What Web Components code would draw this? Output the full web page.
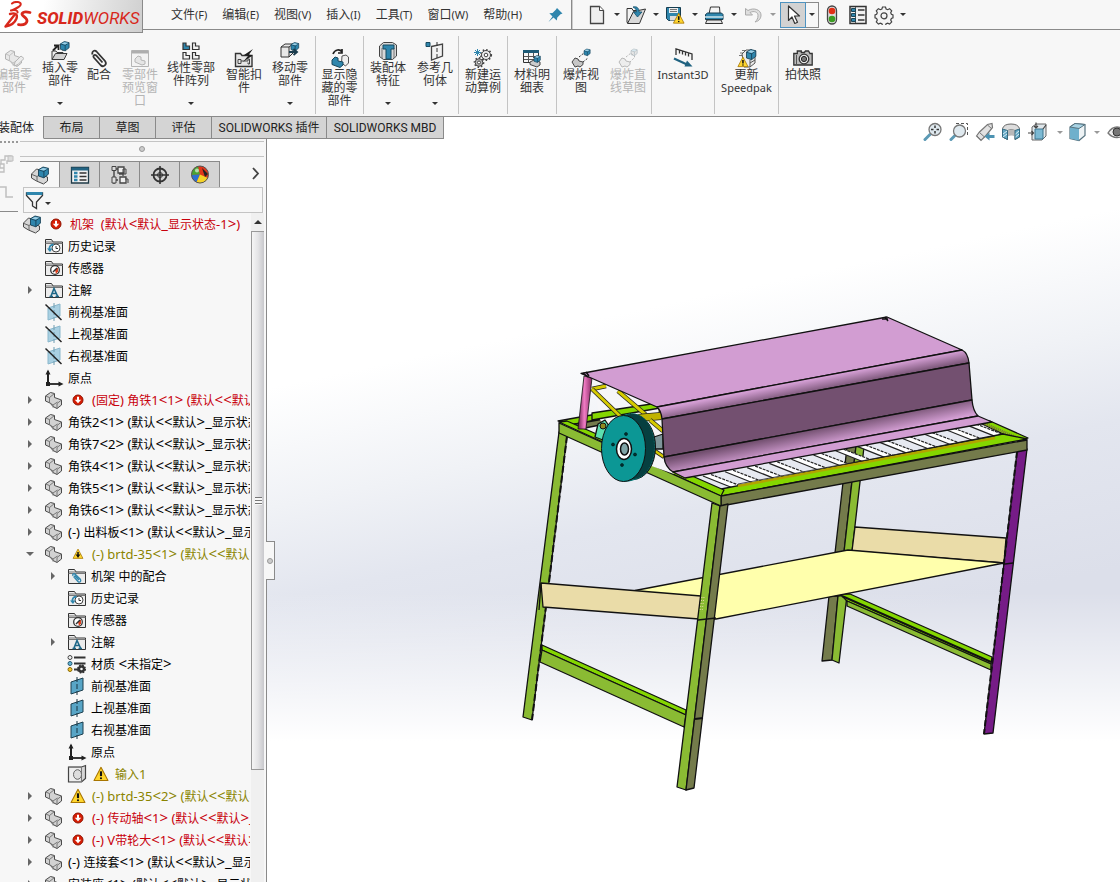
<!DOCTYPE html>
<html lang="zh-CN">
<head>
<meta charset="utf-8">
<title>SOLIDWORKS</title>
<style>
  html, body { height: 100%; }
  body { margin: 0; overflow: hidden; font: 12px/13px "Noto Sans", "Noto Sans CJK SC", sans-serif; color: #333; background: #f7f7f7; }
</style>
</head>
<body>
<sw-app></sw-app>

<script>
/* ---------- icon library, 20 x 20 grid ---------- */
const BLUE = '#2f86ad', INK = '#3a3a3a';
const part = `<path d="M1.500 6l5-3.500 4 1v4l7 2.500v5l-4.500 3.500-4-2-3-3.500-4.500-2z" fill="#d2d2d2" stroke="#4a4a4a"/><path d="M1.500 6l4 1.500 5-4M5.500 7.500v5l3.500 2.500 4.500-3M9 15v2.500M13 13.500l4.500-3.500M13 13.500v5" fill="none" stroke="#777"/>`;
const cube = (x, y, s, c = BLUE) => `<g transform="translate(${x} ${y}) scale(${s})"><path d="M0 3l5-3 6 1.500v6.500l-5 4-6-2z" fill="${c}" stroke="#163f55"/><path d="M0 3l6 2 5-3.500M6 5v7" fill="none" stroke="#163f55"/><path d="M1 3l4-2 5 1-4 2z" fill="#9fd0e6"/></g>`;
const assembly = `<path d="M1.500 9l5-5 4 1v5l7 2v4l-4 3-7-3-5-3z" fill="#d6d6d6" stroke="#4a4a4a"/><path d="M2 9.500l5 2v4.500M7 11.500l4-2.500" fill="none" stroke="#666"/>${cube(8.500,2,0.900)}`;
const folder = `<path d="M1.500 17.500v-14h6l1.500 2.500h9.500v11.500z" fill="#ececec" stroke="#333"/><path d="M2 6h7M1.500 7.500h17" stroke="#777" fill="none"/>`;
const warn = (x, y, s) => `<g transform="translate(${x} ${y}) scale(${s})"><path d="M7 .8L13.500 13H.5z" fill="#ffd62e" stroke="#a87500" stroke-linejoin="round"/><path d="M7 4.500v4.500" stroke="#111" stroke-width="2"/><circle cx="7" cy="11" r="1" fill="#111"/></g>`;
const gear = (x, y, r, f) => `<circle cx="${x}" cy="${y}" r="${r}" fill="${f}" stroke="#444"/><circle cx="${x}" cy="${y}" r="${r + .8}" fill="none" stroke="#444" stroke-width="1.600" stroke-dasharray="1.500 2"/><circle cx="${x}" cy="${y}" r="${r / 2.500}" fill="#fff" stroke="#444"/>`;
const planeShape = (f, e) => `<path d="M4 6l12-4v12L4 18z" fill="${f}" stroke="${e}"/>`;
const lens = (x, y, r) => `<path d="M${x - r + 1} ${y + r - 1}L2 17.500" stroke="#5c9ab5" stroke-width="3" stroke-linecap="round"/><circle cx="${x}" cy="${y}" r="${r}" fill="#dfe9ef" stroke="#777" stroke-width="1.300"/>`;

const ICONS = {
  part, assembly,
  editPart: `<g opacity=".4">${part}<path d="M10 18l1-4 6-6 3 2.500-6 6z" fill="#ddd" stroke="#555"/></g>`,
  insertPart: `<path d="M2 18.500V10h4l1 1.500h6v3" fill="#eee" stroke="${INK}"/><path d="M2 18.500l3.500-6H17l-3 6z" fill="#d2d2d2" stroke="${INK}"/><path d="M3 9.500L7.500 5M4 4.500h4.500V9" fill="none" stroke="#222" stroke-width="1.800"/><path d="M9 4l4 0 0 6" fill="#ddd" stroke="#555"/>${cube(10.500,.5,.780)}`,
  clip: `<path d="M3.500 6.500c-1-3 2-5 4-3l8.500 9.500c2.500 3.500-1.500 7-4.500 4L5 9.800c-1.500-2 .5-3.800 2.200-2.300l6.300 7" fill="none" stroke="#333" stroke-width="1.800"/>`,
  preview: `<g opacity=".4"><path d="M1.500 2.500h17v16h-17z" fill="#eee" stroke="#555"/><path d="M2 4h16" stroke="#444" stroke-width="3"/><path d="M5 11l3-3 3 1v3l4 1v3l-3 1-7-3z" fill="#ccc" stroke="#555"/></g>`,
  pattern: `<g fill="#f3f3f3" stroke="#333" stroke-width="1.200"><path d="M2 2h3v3h3.500v3.500H2z" fill="${BLUE}"/><path d="M11.500 2h3v3H18v3.500h-6.500z"/><path d="M2 11.500h3v3h3.500V18H2z"/><path d="M11.500 11.500h3v3H18V18h-6.500z"/></g>`,
  smart: `<path d="M1.500 5.500h5l1.500 2h10v11H1.500z" fill="#e6e6e6" stroke="#333" stroke-width="1.400"/><path d="M4 11.500h3v4H4zM7 13h7v-2h1.500v5H14v-1.500" fill="none" stroke="#444"/><path d="M19 1l-9 6 4 1-5 6 9.500-6.500-3.500-1z" fill="#1d1d1d"/>`,
  move: `<path d="M1 6l4-3h8v9l-4 4H1z" fill="#e8e8e8" stroke="#333"/><path d="M1 6h8v10M9 6l4-3" fill="none" stroke="#333"/>${cube(11,1.500,.700)}<path d="M9 11h7M13.500 8l3.500 3-3.500 3" fill="none" stroke="#1b3d4e" stroke-width="1.900"/>`,
  showHide: `<path d="M3 6c2-5 7-5 9-2M12 1v4H8" fill="none" stroke="#222" stroke-width="1.700"/><path d="M12 8l4-1 2.500 2v6l-3 3-4-3z" fill="#eee" stroke="#555"/><path d="M2 12l3-3 3 1 0 3 5 1v3l-3 2.500-8-3z" fill="${BLUE}" stroke="#17465c"/>`,
  asmFeature: `<path d="M1.500 5l4-3.500h9L18.500 4v11l-4 3.500h-9l-4-3z" fill="#d8d8d8" stroke="#444"/><path d="M4 7v10M16 7v10" stroke="#777"/><path d="M5 4h11v4h-3v10H8V8H5z" fill="${BLUE}" stroke="#174a61"/>`,
  refGeom: `<path d="M1 1.500h4v4H1z" fill="${BLUE}" stroke="#174a61"/><path d="M6.500 5.500L17.500 3v12l-11 4z" fill="#f3f3f3" stroke="#444" stroke-width="1.300"/><path d="M12 1v18" stroke="#333" stroke-dasharray="4 2"/>`,
  motion: `${gear(13,7,4.500,'#eee')}${gear(6,14.500,3.800,'#bbb')}<path d="M4.500 1v7M1 4.500h7M2 2l5 5M7 2L2 7" stroke="${BLUE}"/>`,
  bom: `<path d="M1.500 2.500h15v12h-15z" fill="#f6f6f6" stroke="#333"/><path d="M1 3.500h16" stroke="#1d5a76" stroke-width="3"/><path d="M2 8.500h14M2 11.500h10M6.500 5v9M11.500 5v5" stroke="#555" fill="none"/><path d="M8 14l4-2 6 2v3l-3 2-7-2.500z" fill="#ccc" stroke="#444"/>${cube(12,7.500,.580)}`,
  explode: `<path d="M1 14l3-4 3 1 1 2 4 1v2.500l-3 2.500-2-1-3 1z" fill="#c6c6c6" stroke="#444"/>${cube(13,1,.560)}<path d="M8 9l5-4M12 14l5-4" stroke="#333" stroke-dasharray="2 1.500"/>`,
  explodeLine: `<g opacity=".38"><path d="M1 14l3-4 3 1 1 2 4 1v2.500l-3 2.500-2-1-3 1z" fill="#ddd" stroke="#555"/>${cube(13,1,.560,'#ccc')}<path d="M8 9l5-4 4 4-5 5" fill="none" stroke="#555" stroke-dasharray="2 1.500"/></g>`,
  instant: `<path d="M3 7V1l16 5v6M6.500 2.500v3M9.500 3.500v3M12.500 4.500v3M15.500 5.500v3" fill="none" stroke="#333" stroke-width="1.300"/><path d="M1 10.500l13 6" stroke="#1f6280" stroke-width="2.200"/><path d="M14 12.500l5.500 6-8 0z" fill="#1f6280"/>`,
  speedpak: `<path d="M5 2.500h7M3 5h6M2 7.500h5" stroke="#777"/><path d="M5 6l4-4 6 0 3 3v10l-5 4H7z" fill="#eaeaea" stroke="#555"/>${cube(9.500,1.500,.850)}<path d="M13 12v7M13 15l5-3" stroke="#555"/>${warn(.500,8.500,.780)}`,
  camera: `<path d="M.8 5.500h3.500V3h4v1.500h3L12.500 3h3l1.500 2.500h2.200v11.500H.8z" fill="#bcbcbc" stroke="#333" stroke-width="1.300"/><path d="M3.500 7v9" stroke="#555"/><circle cx="11" cy="11" r="4.800" fill="#e8e8e8" stroke="#333" stroke-width="1.300"/><circle cx="11" cy="11" r="2.600" fill="#777" stroke="#222"/>`,
  pin: `<path d="M12 3l5.500 5.500-2 .8-3.200 3.200-.5 3L8.500 12.500 3.500 17l4-5.500-3.200-3.200 3.200-.4 3.300-3.200z" fill="${BLUE}"/>`,
  doc: `<path d="M3.500 1.500h9l4 4v13h-13z" fill="#eee" stroke="#444" stroke-width="1.300"/><path d="M12.500 1.500v4h4" fill="#fff" stroke="#444"/>`,
  open: `<path d="M1 3.500h5l1 2h5v12H1z" fill="#f2f2f2" stroke="#333"/><path d="M1.500 18.500l6-12 12-2.500-6 14.500z" fill="#d8d8d8" stroke="#333"/><path d="M7 2c4-1 6 1 6 5h3l-4.500 5-4-5h3c0-2-1-4-3.500-5z" fill="${BLUE}" stroke="#17516b" stroke-width=".8"/>`,
  save: `<path d="M1.500 2.500h14v13h-12l-2-2z" fill="${BLUE}" stroke="#153c50"/><path d="M4 3h9v5H4z" fill="#eee"/><path d="M5 4.500h7M5 6.500h7" stroke="#777"/><path d="M5 11h7v4.500H5z" fill="#ddd"/>${warn(8,7.500,.820)}`,
  print: `<path d="M5 9l1.500-7h9L16 9z" fill="#f4f4f4" stroke="#333"/><path d="M1.500 9.500l2-1.500h14l1.500 1.500v5h-17.500z" fill="${BLUE}" stroke="#153c50"/><path d="M1 12h18" stroke="#cfe6ef" stroke-width="1.500"/><path d="M3 15l-1.500 3.500h17L17 15z" fill="#e6e6e6" stroke="#333"/>`,
  undo: `<path d="M2.500 3.500v6.500h7L7 7.500c4-2 8-.5 8 3 0 3-1 4.500-3 6.500 4.500-1 6-4 6-7 0-5-7-8-13-4.500z" fill="#dedede" stroke="#aaa"/>`,
  cursor: `<path d="M5.500 1v14.500l3.500-3.500 2.800 6.500 2.700-1.200-3-6.300h5z" fill="#fff" stroke="#333" stroke-width="1.200" stroke-linejoin="round"/>`,
  traffic: `<rect x="5.500" y="1" width="9" height="18" rx="4.500" fill="#ddd" stroke="#444" stroke-width="1.300"/><circle cx="10" cy="6" r="3.300" fill="#e12f16"/><circle cx="10" cy="14" r="3.300" fill="#3b9c22"/>`,
  options: `<path d="M2 1.500h16v17H2z" fill="#f0f0f0" stroke="#333" stroke-width="1.500"/><path d="M7.500 2v16" stroke="#555"/><g fill="${BLUE}" stroke="#1d4455"><path d="M3.500 3.500h4v3h-4zM3.500 8.500h4v3h-4zM3.500 13.500h4v3h-4z"/></g><path d="M10 5h6.500M10 10h6.500M10 15h6.500" stroke="#333" stroke-width="1.300"/>`,
  gear: `<path d="M8.500 2h3l.6 2 1.600.7 1.900-1 2.100 2.100-1 1.900.7 1.600 1.600.6v3l-1.600.6-.7 1.600 1 1.900-2.100 2.100-1.900-1-1.600.7-.6 1.700h-3l-.6-1.700-1.600-.7-1.900 1-2.100-2.100 1-1.900-.7-1.600L1 12.900v-3l1.600-.6.7-1.600-1-1.900 2.100-2.100 1.900 1L7.900 4z" fill="#f4f4f4" stroke="#444" stroke-width="1.200"/><circle cx="10" cy="10.800" r="3" fill="none" stroke="#444" stroke-width="1.200"/>`,
  zoomFit: `${lens(12,7.500,6)}<path d="M12 3.500v2.500M12 9v2.500M8 7.500h2.500M13.500 7.500H16" stroke="#333" stroke-width="1.500"/>`,
  zoomArea: `<path d="M7 1.500h11.500V13" fill="none" stroke="#555" stroke-dasharray="3 2"/>${lens(10.500,9,6)}`,
  prevView: `<path d="M1.500 14l3-4 8-7.500 4.500-1 .5 4-6.500 8-5 5z" fill="#e2e2e2" stroke="#777" stroke-width="1.200"/><path d="M12.500 3l4 3.500M4.500 10.500l5 4.500M2 14l4 4" fill="none" stroke="#777"/><path d="M19.500 14.500h-6" stroke="#4d93b2" stroke-width="3"/><path d="M14.500 10.500v8l-5-4z" fill="#4d93b2"/>`,
  section: `<path d="M1.500 6.500Q3 2 10 2t8.500 4.500V15l-4.500 2.500V8.500q-4-2-7.500 0v9L1.500 15z" fill="#ddd" stroke="#666"/><path d="M6.500 8.500q3.500-2 7.500 0v6q-3.500-2-7.500 0z" fill="#b9b9b9"/><path d="M1.500 7l5 1.500v9l-5-2.500zM14 8.500L18.500 7v8L14 17.500z" fill="#63a8c5" stroke="#366b80"/><path d="M2 12l4-3M2 15l4-3M14.500 12l3.500-3M14.500 15l3.500-3" stroke="#dbeef5"/>`,
  orient: `<path d="M4 5l4-3h10v12l-4 4H4z" fill="#dfe6ea" stroke="#666"/><path d="M7 7h8v10H7z" fill="#7cb9d3" stroke="#3c7791"/><path d="M15 7l3-4M8 .500v5M6 4l2 2 2-2M0 11h5M3.500 9l2 2-2 2" fill="none" stroke="#444" stroke-width="1.200"/>`,
  display: `<path d="M2 5l5-3.500 10 1v11L11 18.500l-9-2z" fill="#eef3f5" stroke="#56727f" stroke-width="1.200"/><path d="M2 5l9 1.500v12l-9-2z" fill="#6fb0cc"/><path d="M2 5l5-3.500 10 1-6 4z" fill="#a8d3e4" stroke="#56727f"/>`,
  eye: `<path d="M1 11c5-8 13-8 18 0-5 6-13 6-18 0z" fill="#eee" stroke="#777" stroke-width="1.300"/><circle cx="10" cy="10" r="4" fill="#777" stroke="#333"/>`,
  property: `<path d="M1.500 2.500h17v15.500h-17z" fill="#f2f2f2" stroke="#1f3b48" stroke-width="1.300"/><path d="M1.500 4h17" stroke="#236483" stroke-width="3"/><path d="M4 8h3.500M4 11.500h3.500M4 15h3.500" stroke="${BLUE}" stroke-width="2.300"/><path d="M9.500 8h7M9.500 11.500h7M9.500 15h7" stroke="#333" stroke-width="1.300"/>`,
  config: `<path d="M4 1v18M4 4h4M4 15h4" fill="none" stroke="#444" stroke-width="1.400"/><path d="M2 1.500h4v4H2zM2 12h4v6H2z" fill="#ddd" stroke="#444"/><path d="M8 2h6v6H8zM9 9h4v2M10 12h6v6h-6z" fill="#eee" stroke="#444" stroke-width="1.300"/><path d="M13 4h3v5h-3zM15 14h3v4" fill="none" stroke="#444"/>`,
  target: `<circle cx="10" cy="10" r="6.500" fill="none" stroke="#333" stroke-width="1.800"/><path d="M10 1v18M1 10h18" stroke="#333" stroke-width="1.600"/><circle cx="10" cy="10" r="2.500" fill="none" stroke="#333"/>`,
  ball: `<circle cx="10" cy="9.500" r="8.500" fill="#e1361b"/><path d="M10 9.500L1.500 10A8.500 8.500 0 0 1 8 1.300z" fill="#4aa332"/><path d="M10 9.500L1.500 10a8.500 8.500 0 0 0 5 7.300z" fill="#2d6fd0"/><path d="M10 9.500L6.500 17.300A8.500 8.500 0 0 0 18 13z" fill="#f5d327"/><path d="M12 3l6 6-3 3z" fill="#222"/><circle cx="10" cy="9.500" r="8.500" fill="none" stroke="#555"/><circle cx="7" cy="5.500" r="2" fill="#fff" opacity=".6"/>`,
  funnel: `<path d="M1.500 3h16v2.500l-6 6.500v6.500l-4-2.500v-4l-6-6.500z" fill="#f4f4f4" stroke="#333" stroke-width="1.300"/><path d="M1.500 3.500h16" stroke="${BLUE}" stroke-width="3"/>`,
  error: `<circle cx="10" cy="10" r="5" fill="#d81e05" stroke="#8f1200"/><path d="M10 6.800v4" stroke="#fff" stroke-width="2"/><path d="M6.800 9.800h6.400L10 13.200z" fill="#fff"/>`,
  warnSmall: `${warn(4.700,4.500,.760)}<path d="M7.500 10.500h5l-2.500 3z" fill="#111"/>`,
  warning: warn(2.500, 2.500, 1.070),
  history: `${folder}<circle cx="12" cy="12" r="4" fill="#fff" stroke="#444"/><path d="M12 10v2.500h2" fill="none" stroke="#333"/><path d="M9.500 8.500C6 9 5 11 5.500 14" fill="none" stroke="${BLUE}" stroke-width="1.800"/><path d="M3 12.500h5.500L6 16z" fill="${BLUE}"/>`,
  sensor: `${folder}<circle cx="11" cy="12" r="4.300" fill="#fff" stroke="#333" stroke-width="1.300"/><path d="M11 12l3-2.500v4L12 16z" fill="#e2401c"/><path d="M9 14l4-4" stroke="#333" stroke-width="1.500"/>`,
  annot: `${folder}<path d="M5.500 16.500h3.500M11.500 16.500h3.500M7 16l3-7.500 3.500 7.500M8 13.500h4" fill="none" stroke="#1d6788" stroke-width="1.600"/>`,
  mates: `${folder}<path d="M6 10c-1-2 1-3 2.500-1.500l5 5c1 2-1 3.500-2.500 2l-4-4.500 1-1 4 4" fill="none" stroke="${BLUE}" stroke-width="1.300"/>`,
  planeOff: `${planeShape('#a9d0e2', '#8ab7cc')}<path d="M10 1v18" stroke="#6f9cb0" stroke-dasharray="5 2"/><path d="M1.500 2.500l16 15.500" stroke="#222" stroke-width="1.500"/>`,
  plane: `${planeShape('#58a5c6', '#1d3f4e')}<path d="M10 1v18" stroke="#173542" stroke-dasharray="5 2"/>`,
  origin: `<path d="M4 17V3" stroke="#222" stroke-width="2"/><path d="M1.500 6.500L4 1.500l2.500 5zM14.500 13.500l5 2.500-5 2.500z" fill="#222"/><path d="M4 16h12" stroke="#222" stroke-width="1.800"/><path d="M2 14h4v4H2z" fill="#222"/>`,
  material: `<circle cx="3" cy="3.500" r="2" fill="#f4f4f4" stroke="#444"/><circle cx="3" cy="9.500" r="2" fill="#63b4d6" stroke="#245a72"/><circle cx="3" cy="15.500" r="2" fill="#f4c22b" stroke="#8a6a00"/><path d="M7 3.500h11.500M7 9.500h11.500M7 15.500h4" stroke="#333" stroke-width="1.800"/><circle cx="14.500" cy="15" r="2.500" fill="none" stroke="#333" stroke-width="2.400"/><circle cx="14.500" cy="15" r="3.800" fill="none" stroke="#333" stroke-width="1.500" stroke-dasharray="1.700 1.300"/>`,
  imported: `<path d="M1.500 3h13l4-1.500v13L14.500 18h-13z" fill="#d5d5d5" stroke="#444" stroke-width="1.200"/><path d="M1.500 3h13v15" fill="none" stroke="#777"/><path d="M2.500 4h11v13h-11z" fill="#eee"/><ellipse cx="10.500" cy="10.500" rx="4" ry="4.800" fill="#ddd" stroke="#666"/>`,
  chevron: `<path d="M8 4l5 5.500L8 15" fill="none" stroke="#444" stroke-width="1.800"/>`,
  ghostSteps: `<path d="M0 18V9h5v4h4V9H6V5h4V1h6v5h-4v3M9 13v4H3" fill="none" stroke="#c0c0c0" stroke-width="1.400"/><path d="M13 1h5v5h-5z" fill="#ddd" stroke="#c0c0c0"/>`,
  ghostPulse: `<path d="M0 14h3V4h8v10h7" fill="none" stroke="#c0c0c0" stroke-width="1.500"/>`,
  dsMark: `<g fill="none" stroke="#d8281c" stroke-linecap="round" stroke-linejoin="round"><path d="M9 2.500C12 0 19 .5 17.500 4 16 7 11 8 8 9.500 12 8.500 15 9.500 14.500 11.500" stroke-width="2"/><path d="M7 13c5-1.500 8 0 6.500 4.500C12 21.500 8 24.500 2.500 25.500l8.500-11" stroke-width="2.400"/><path d="M27 11.500c-3-.8-7-.8-8 1.200-.8 2 5.500 4 5 7.300-.4 3-3.500 4.200-8.500 3.700" stroke-width="2.800"/></g>`
};

/* Latin runs and angle brackets take their own sizes beside the ideographs. */
const esc = s => s.replace(/&/g, '&amp;').replace(/</g, '&lt;').replace(/>/g, '&gt;');
const mixed = s => s.split(/([\u3400-\u9fff]+|[<>_]+)/).filter(Boolean)
  .map(t => /[\u3400-\u9fff]/.test(t) ? t : `<span class="${/[<>_]/.test(t) ? 'br' : 'la'}">${esc(t)}</span>`).join('');

const BASE = `<style>
  *, *::before, *::after { box-sizing: border-box; }
  button { font: inherit; color: inherit; background: none; border: 0; padding: 0; margin: 0; }
  .la { font-size: var(--latin, 12px); white-space: pre; }
  .br { font-size: 15px; line-height: 1px; }
</style>`;

class Base extends HTMLElement {
  connectedCallback() {
    if (this.shadowRoot) return;
    this.attachShadow({ mode: 'open' }).innerHTML = BASE + this.view();
  }
  at(name, fallback = '') { return this.getAttribute(name) ?? fallback; }
}
const define = (name, view) => customElements.define(name, class extends Base { view() { return view(this); } });

define('sw-icon', e => `
  <style>:host { display: block; flex: none; white-space: normal; width: ${e.at('w', '20')}px; height: ${e.at('h', '20')}px; } svg { display: block; width: 100%; height: 100%; }</style>
  <svg viewBox="0 0 ${e.at('w', '20')} ${e.at('h', '20')}" aria-hidden="true">${ICONS[e.at('name')] || ''}</svg>`);

define('sw-caret', e => `
  <style>:host { display: flex; justify-content: center; flex: none; }
  i { width: 0; height: 0; border: 3px solid transparent; border-bottom: 0; border-top-color: ${e.at('color', '#333')}; }</style><i></i>`);

define('sw-logo', () => `
  <style>
    :host { display: flex; align-items: center; flex: none; align-self: flex-start; width: 143px; height: 33px; padding-left: 3px; gap: 4px;
      background: linear-gradient(100deg, #fff 30%, #cfcfcf); border: solid #8a8a8a; border-width: 0 1px 1px 0; z-index: 2; color: #d8281c;
      font: italic 400 17px/20px Roboto, sans-serif; box-sizing: border-box; }
    span { padding-top: 4px; } b { font-weight: 800; }
  </style><sw-icon name="dsMark" w="30" h="30"></sw-icon><span><b>SOLID</b>WORKS</span>`);

/* ---------- menu bar with the quick access tools ---------- */
define('sw-menu-bar', () => {
  const menus = ['文件(F)', '编辑(E)', '视图(V)', '插入(I)', '工具(T)', '窗口(W)', '帮助(H)'];
  const tools = [['doc', '新建'], ['open', '打开'], ['save', '保存'], ['print', '打印'], ['undo', '撤销']];
  return `
  <style>
    :host { display: flex; height: 30px; align-items: center; background: #f7f7f7; border-bottom: 1px solid #8a8a8a; box-sizing: border-box; --latin: 11px; }
    nav { display: flex; margin-left: 21px; }
    nav button { padding: 0 8px 0 7px; line-height: 28px; white-space: nowrap; }
    .pin { margin-left: 13px; } .pin, .tool { width: 24px; display: grid; place-items: center; flex: none; }
    .bar { width: 2px; height: 29px; background: #8a8a8a; border-right: 1px solid #ccc; margin: 0 12px 0 4px; }
    .drop { width: 15px; height: 24px; flex: none; }
    .select { display: flex; border: 1px solid #8a8a8a; height: 26px; margin: 0; }
    .select .tool { width: 26px; margin: -1px; border: 1px solid #4f93c0; background: #d2d2d2; height: 26px; }
    .select .drop { width: 13px; }
    .wide { width: 26px; } .end { width: 11px; }
  </style>
  <sw-logo></sw-logo>
  <nav>${menus.map(m => `<button>${mixed(m)}</button>`).join('')}</nav>
  <button class="pin" aria-label="固定"><sw-icon name="pin"></sw-icon></button>
  <div class="bar"></div>
  ${tools.map(([i, l]) => `<button class="tool" aria-label="${l}"><sw-icon name="${i}"></sw-icon></button><button class="drop" aria-label="${l}选项"><sw-caret ${i === 'undo' ? 'color="#999"' : ''}></sw-caret></button>`).join('')}
  <div class="select"><button class="tool" aria-label="选择"><sw-icon name="cursor"></sw-icon></button><button class="drop" aria-label="选择选项"><sw-caret></sw-caret></button></div>
  <button class="tool wide" aria-label="重建模型"><sw-icon name="traffic"></sw-icon></button>
  <button class="tool wide" aria-label="文件属性"><sw-icon name="options"></sw-icon></button>
  <button class="tool wide" aria-label="选项"><sw-icon name="gear"></sw-icon></button>
  <button class="drop end" aria-label="更多"><sw-caret></sw-caret></button>`;
});

/* ---------- ribbon ---------- */
define('sw-ribbon-button', e => `
  <style>
    :host { display: block; flex: none; width: ${e.at('width', '48')}px; --latin: 11px; }
    button { display: flex; flex-direction: column; align-items: center; width: 100%; height: 85px; padding-top: ${e.hasAttribute('drop') ? 11 : 18}px; line-height: 13px; color: ${e.hasAttribute('off') ? '#b5b5b5' : '#333'}; }
    .label { white-space: pre; text-align: center; }
    sw-caret { margin-top: 15px; }
  </style>
  <button ${e.hasAttribute('off') ? 'disabled' : ''}><sw-icon name="${e.at('icon')}"></sw-icon>
  <span class="label">${e.at('label').split('|').map(mixed).join('<br>')}</span>
  ${e.hasAttribute('drop') ? '<sw-caret></sw-caret>' : ''}</button>`);

define('sw-ribbon-group', () => `
  <style>:host { display: flex; flex: none; margin-top: 6px; height: 78px; border-right: 1px solid #c4c4c4; }
  :host(:last-child) { border: 0; } ::slotted(*) { margin-top: -6px; } :host(:first-child) { margin-left: -10px; padding-right: 5px; }</style><slot></slot>`);

define('sw-ribbon', () => `
  <style>:host { display: flex; height: 87px; box-sizing: border-box; background: #f7f7f7; border-bottom: 1px solid #8a8a8a; overflow: hidden; }</style><slot></slot>`);

/* ---------- command tabs + heads-up view tools ---------- */
define('sw-tabs', () => {
  const tabs = [['装配体', 44], ['布局', 56], ['草图', 56], ['评估', 56], ['SOLIDWORKS 插件', 115], ['SOLIDWORKS MBD', 117]];
  const hud = [['zoomFit', 26], ['zoomArea', 26], ['prevView', 26], ['section', 26], ['orient', 28, 1], ['display', 22, 1], ['eye', 26]];
  return `
  <style>
    :host { display: flex; align-items: flex-start; height: 22px; background: #fff; position: relative; z-index: 1; overflow: visible; }
    .tab { height: 22px; flex: none; background: #d4d4d4; border: solid #8a8a8a; border-width: 0 1px 1px 0; line-height: 22px; color: #222; white-space: nowrap; font-family: Roboto, "Noto Sans CJK SC", sans-serif; display: flex; justify-content: center; }
    .tab.on { background: #f7f7f7; border-bottom-color: #f7f7f7; margin-top: -1px; height: 23px; line-height: 24px; padding-right: 9px; justify-content: flex-end; }
    .hud { display: flex; margin: 4px -10px 0 auto; }
    .hud button { display: grid; place-items: center; flex: none; height: 22px; }
  </style>
  ${tabs.map(([t, w], i) => `<button class="tab ${i ? '' : 'on'}" style="width:${w}px">${mixed(t)}</button>`).join('')}
  <div class="hud">${hud.map(([n, w, d]) => `<button style="width:${w}px" aria-label="${n}"><sw-icon name="${n}"></sw-icon></button>${d ? '<button style="width:15px" aria-label="选项"><sw-caret color="#999"></sw-caret></button>' : ''}`).join('')}</div>`;
});

/* ---------- feature tree ---------- */
define('sw-tree-item', e => {
  const lv = +e.at('level', '1'), ex = e.at('toggle');
  const color = { error: '#c8000c', warn: '#8a8400' }[e.at('tone')] || '#000';
  return `
  <style>
    :host { display: flex; align-items: center; gap: 4px; height: 22px; flex: none; padding-left: ${lv === 0 ? 2 : (lv - 1) * 23}px; color: ${color}; line-height: 22px; overflow: hidden; --latin: 13px; }
    .toggle { width: 20px; height: 20px; flex: none; display: grid; place-items: center; }
    .toggle i { width: 0; height: 0; border: 4px solid transparent; ${ex === 'open' ? 'border-bottom: 0; border-top-color: #666;' : 'border-right: 0; border-left-color: #666;'} }
    .text { flex: none; white-space: pre; }
    .text::before { content: "\\200b"; font-size: 13px; }
  </style>
  ${lv === 0 ? '' : ex ? '<button class="toggle" aria-label="展开"><i></i></button>' : '<span class="toggle"></span>'}
  <sw-icon name="${e.at('icon')}"></sw-icon>${e.at('status') ? `<sw-icon name="${e.at('status')}"></sw-icon>` : ''}
  <span class="text">${mixed(e.at('text'))}</span>`;
});

define('sw-tree', () => {
  const tail = ' (默认<<默认>_显示状态 1>)';
  const rows = [
    [0, 'assembly', '机架  (默认<默认_显示状态-1>)', '', 'error', 'error'],
    [1, 'history', '历史记录'], [1, 'sensor', '传感器'], [1, 'annot', '注解', 'c'],
    [1, 'planeOff', '前视基准面'], [1, 'planeOff', '上视基准面'], [1, 'planeOff', '右视基准面'], [1, 'origin', '原点'],
    [1, 'part', '(固定) 角铁1<1>' + tail, 'c', 'error', 'error'],
    [1, 'part', '角铁2<1>' + tail, 'c'], [1, 'part', '角铁7<2>' + tail, 'c'], [1, 'part', '角铁4<1>' + tail, 'c'],
    [1, 'part', '角铁5<1>' + tail, 'c'], [1, 'part', '角铁6<1>' + tail, 'c'], [1, 'part', '(-) 出料板<1>' + tail, 'c'],
    [1, 'part', '(-) brtd-35<1>' + tail, 'open', 'warn', 'warnSmall'],
    [2, 'mates', '机架 中的配合', 'c'], [2, 'history', '历史记录'], [2, 'sensor', '传感器'], [2, 'annot', '注解', 'c'],
    [2, 'material', '材质 <未指定>'], [2, 'plane', '前视基准面'], [2, 'plane', '上视基准面'], [2, 'plane', '右视基准面'],
    [2, 'origin', '原点'], [2, 'imported', '输入1', '', 'warn', 'warning'],
    [1, 'part', '(-) brtd-35<2>' + tail, 'c', 'warn', 'warning'],
    [1, 'part', '(-) 传动轴<1>' + tail, 'c', 'error', 'error'], [1, 'part', '(-) V带轮大<1>' + tail, 'c', 'error', 'error'],
    [1, 'part', '(-) 连接套<1>' + tail, 'c'], [1, 'part', '安装座<1>' + tail, 'c']
  ];
  return `
  <style>:host { display: flex; flex-direction: column; flex: 1; min-width: 0; overflow: hidden; margin-right: 1px; }</style>
  ${rows.map(([l, i, t, x = '', tone = '', s = '']) => `<sw-tree-item level="${l}" icon="${i}" text="${esc(t)}" toggle="${x}" tone="${tone}" status="${s}"></sw-tree-item>`).join('')}`;
});

define('sw-scrollbar', () => `
  <style>
    :host { display: flex; flex-direction: column; flex: none; width: 13px; margin-right: 2px; background: #f0f0f0; }
    .up { height: 18px; display: grid; place-items: center; }
    .up i { border: 4px solid transparent; border-top: 0; border-bottom-color: #333; }
    .thumb { flex: 0 1 539px; border: 1px solid #999; border-right: 0; background: linear-gradient(90deg, #f5f5f5, #e4e4e6 50%, #c8c8cc); display: grid; place-items: center; }
    .grip { width: 7px; height: 8px; background: repeating-linear-gradient(#777 0 1px, #f7f7f7 1px 3px); }
  </style><button class="up" aria-label="向上滚动"><i></i></button><div class="thumb"><span class="grip"></span></div>`);

define('sw-panel', () => `
  <style>
    :host { display: flex; flex-direction: column; flex: none; box-sizing: border-box; width: 247px; background: #f7f7f7; border-right: 1px solid #8a8a8a; position: relative; min-height: 0; z-index: 1; }
    .grab { height: 16px; margin: 2px 2px 0 0; border: solid #c4c4c4; border-width: 1px 0; display: grid; place-items: center; flex: none; }
    .dot { width: 6px; height: 6px; border-radius: 50%; border: 1px solid #999; background: #ccc; }
    .tabs { display: flex; margin-top: 4px; height: 26px; flex: none; }
    .tabs button { width: 40px; display: grid; place-items: center; border: solid #8a8a8a; border-width: 1px 1px 0 0; background: #d4d4d4; }
    .tabs .on { background: #f7f7f7; }
    .tabs .more { border: 0; background: none; width: 22px; margin: 0 0 0 auto; }
    .filter { display: flex; align-items: center; margin: 0 3px 0 3px; height: 26px; border: 1px solid #c4c4c4; padding-left: 1px; flex: none; }
    .filter input { flex: 1; min-width: 0; border: 0; outline: 0; background: none; height: 22px; font: inherit; }
    .filter sw-caret { padding-top: 6px; }
    .body { display: flex; flex: 1; min-height: 0; }
    .handle { position: absolute; left: 100%; top: 402px; width: 9px; height: 39px; display: grid; place-items: center; background: #f7f7f7; border: solid #8a8a8a; border-width: 1px 1px 1px 0; }
  </style>
  <div class="grab"><span class="dot"></span></div>
  <div class="tabs">
    <button class="on" aria-label="特征树"><sw-icon name="assembly"></sw-icon></button>
    <button aria-label="属性"><sw-icon name="property"></sw-icon></button>
    <button aria-label="配置"><sw-icon name="config"></sw-icon></button>
    <button aria-label="尺寸"><sw-icon name="target"></sw-icon></button>
    <button aria-label="外观"><sw-icon name="ball"></sw-icon></button>
    <button class="more" aria-label="更多"><sw-icon name="chevron"></sw-icon></button>
  </div>
  <label class="filter"><sw-icon name="funnel"></sw-icon><sw-caret></sw-caret><input type="text" aria-label="过滤"></label>
  <div class="body"><sw-tree></sw-tree><sw-scrollbar></sw-scrollbar></div>
  <button class="handle" aria-label="折叠"><span class="dot"></span></button>`);

define('sw-rail', () => `
  <style>
    :host { display: block; flex: none; width: 20px; background: #f7f7f7; overflow: hidden; }
    div { display: flex; flex-direction: column; width: 18px; height: 73px; border-bottom: 1px solid #8a8a8a; padding-top: 2px; }
    i { height: 2px; margin-bottom: 12px; background: repeating-linear-gradient(90deg, #999 0 2px, transparent 2px 4px); }
    sw-icon { margin: 0 0 8px -5px; }
  </style><div><i></i><sw-icon name="ghostSteps"></sw-icon><sw-icon name="ghostPulse"></sw-icon></div>`);

/* ---------- 3D model ---------- */
define('sw-viewport', () => {
  const poly = (p, f, s = '#111', w = 1.3) => `<polygon points="${p}" fill="${f}" stroke="${s}" stroke-width="${w}"/>`;
  const line = (p, s = '#111', w = 1.3, x = '') => `<polyline points="${p}" fill="none" stroke="${s}" stroke-width="${w}" ${x}/>`;
  const G = '#8abb33', B = '#84d600', O = '#747b4b', T = '#eadca8', Y = '#ffffac', P = '#d29dd2';
  let slats = '';
  for (let i = 0; i < 13; i++) {
    const x = 703 + 22.100 * i, y = 476 - 4.200 * i;
    slats += poly(`${x},${y} ${x + 8},${y - 1.500} ${x + 38},${y + 10} ${x + 30},${y + 12}`, '#fff', 'none')
      + line(`${x},${y} ${x + 30},${y + 12}`, '#222', 1.2) + line(`${x + 8},${y - 1.500} ${x + 38},${y + 10}`, '#222', 1.2, 'stroke-dasharray="3 1"');
  }
  let ribs = '';
  for (let i = 1; i < 6; i++) ribs += `<ellipse cx="${624 + i * 1.700}" cy="${449 - i * .5}" rx="22" ry="33" fill="#063f40" stroke="#0c8a88" stroke-width=".6" stroke-dasharray="2 1"/>`;
  let holes = [[626,434],[613,444.500],[635,454.500],[622,465]].map(([x, y]) => `<circle cx="${x}" cy="${y}" r="1.500" fill="#033" stroke="#000" stroke-width=".5"/>`).join('');
  return `
  <style>
    :host { display: block; flex: 1; min-width: 0; overflow: hidden;
      background: linear-gradient(to bottom, rgba(255,255,255,0) 61%, #fff 81%), linear-gradient(168deg, #fff 27%, #f0f2f6 40%, #e3e6ef 50%, #dcdfea 66%); }
    svg { display: block; width: 100%; height: 100%; }
  </style>
  <svg viewBox="267 139 853 743" role="img" aria-label="机架" stroke-linejoin="round">
    <defs>
      <linearGradient id="bendTop" gradientUnits="userSpaceOnUse" x1="810" y1="380" x2="812.500" y2="393"><stop offset="0" stop-color="${P}"/><stop offset="1" stop-color="#735070"/></linearGradient>
      <linearGradient id="bendLow" gradientUnits="userSpaceOnUse" x1="815" y1="429" x2="818.500" y2="446"><stop offset="0" stop-color="#735070"/><stop offset="1" stop-color="${P}"/></linearGradient>
      <linearGradient id="pole"><stop offset="0" stop-color="#6d2150"/><stop offset=".45" stop-color="#f07cc4"/><stop offset="1" stop-color="#8a2a66"/></linearGradient>
    </defs>
    <!-- back leg -->
    ${poly('847,447 856,446 844,552 835,553', O)}${poly('856,446 864,447 852,552 844,552', G)}
    ${poly('829,596 838,596 832,660 822,661', O)}${poly('838,596 847,595 839,663 832,660', G)}
    ${poly('840,594 850,594 992,657 991,664 847,601', B)}${poly('847,601 991,664 991,670 847,606', G)}
    ${line('842,596 991,662', '#111', 2)}
    <!-- tray -->
    ${poly('855,527 1006,538 1004,563 852,551', T)}
    ${poly('635,590.500 848,550 1004,563 716,619 698,619', Y)}
    <!-- purple leg -->
    ${poly('1017,452 1027,449 993,733 984,734', '#761c87')}
    ${line('1017,452 984,734', '#111', 2, 'stroke-dasharray="6 3"')}${line('1005,564 1013,563')}
    <!-- left leg -->
    ${poly('559,432 567,436 532,720 523,717', G)}${line('567,436 532,720', '#111', 2, 'stroke-dasharray="7 3"')}
    ${poly('542,645 686,710 686,715 542,650', B)}${poly('542,650 686,715 684,727 540,662', G)}
    ${poly('541,583 701,596 699,619 543,607', T)}${line('541,583 539,610')}
    <!-- top frame -->
    ${poly('558,421 658,403 660,408 570,425', B)}${poly('570,425 660,409 660,413 580,429', O)}
    ${slats}
    ${poly('980,423 990,421 1028,438 1018,441', B)}${line('985,424 1022,440', '#7a6a40', 3, 'stroke-dasharray="1 1"')}
    ${poly('716,490 1003,434 1027,439 722,496', B)}
    ${line('738,486 995,438', '#b3a300', 2.500)}${line('738,484 995,436', '#222', .8)}
    ${poly('721,496 1027,440 1027,450 721,506', O)}
    ${poly('559,422 567,421 724,490 721,496', B)}
    ${poly('559,423 721,496 721,506 559,433', G)}
    <!-- front leg -->
    ${poly('712,503 720,506 686,790 677,787', G)}${poly('720,506 728,504 694,788 686,790', O)}
    ${line('695,719 703,718', '#111', 2)}${line('698,620 716,618')}
    <path d="M702 597l-2 15M704 597l-2 15" stroke="#eadca8" stroke-dasharray="1 2"/>
    <!-- inside of the hood -->
    <polygon points="592,380 658,408 664,460 674,474 640,462 600,420" fill="#f6f6f8"/>
    ${poly('592,413 658,403 660,408 592,420', B)}
    ${line('592,389 606,386', '#222', 4.500)}${line('592,389 606,386', '#d5ca00', 3)}
    ${line('592,389 621,417', '#222', 4.500)}${line('592,389 621,417', '#d5ca00', 3)}
    ${line('618,391 646,415', '#222', 4.500)}${line('618,391 646,415', '#d5ca00', 3)}
    ${line('638,418 661,416', '#222', 8)}${line('638,418 661,416', '#c0b200', 6.500)}
    ${line('650,420 663,431', '#222', 4.500)}${line('650,420 663,431', '#d5ca00', 3)}
    ${line('655,451 664,457', '#222', 4)}${line('655,451 664,457', '#d5ca00', 2.500)}
    ${poly('654,437 663,434 663,449 655,449', '#7e969a')}
    ${poly('598,424 605,420 609,426 603,440 595,437', '#5ce0b0')}
    <circle cx="603" cy="426" r="3" fill="#8f8a20" stroke="#111"/>
    <polygon points="584,376 592,378 586,429 578,429" fill="url(#pole)" stroke="#111" stroke-width=".8"/>
    <!-- pulley -->
    <ellipse cx="633" cy="447" rx="22.500" ry="32.500" fill="#052d2e" stroke="#111"/>
    ${ribs}
    <ellipse cx="623.500" cy="448.500" rx="22" ry="33" fill="#0c9795" stroke="#111"/>
    <ellipse cx="624" cy="449" rx="7.500" ry="10.500" fill="#fff" stroke="#111" stroke-width="1.500"/>
    <ellipse cx="624.500" cy="449" rx="4" ry="6" fill="#7fa3a5" stroke="#111" stroke-width="1.500"/>
    ${holes}
    <!-- hood -->
    <path d="M581 373.500L887 317 962 350L657 407z" fill="${P}" stroke="#111" stroke-width="1.300"/>
    <path d="M657 407L962 350Q968 353 969 363L662 419Q661 410 657 407z" fill="url(#bendTop)" stroke="#111" stroke-width="1.300"/>
    <path d="M662 419L969 363 972 400 664 457z" fill="#735070" stroke="#111" stroke-width="1.300"/>
    <path d="M664 457L972 400Q973 411 978 416L673 472Q665 467 664 457z" fill="url(#bendLow)" stroke="#111" stroke-width="1.300"/>
    <path d="M673 472L978 416 992 422 685 478z" fill="${P}" stroke="#111" stroke-width="1.300"/>
    <path d="M583 373l5 4M586 372l3 4M885 317l3 4M882 319h6" stroke="#111" stroke-width="1.500"/>
  </svg>`;
});

define('sw-app', () => `
  <style>
    :host { display: flex; flex-direction: column; height: 100vh; overflow: hidden; }
    main { display: flex; flex: 1; min-height: 0; }
    sw-menu-bar, sw-ribbon, sw-tabs { flex: none; }
    sw-menu-bar { position: relative; z-index: 2; }
  </style>
  <sw-menu-bar></sw-menu-bar>
  <sw-ribbon>
    <sw-ribbon-group>
      <sw-ribbon-button width="48" icon="editPart" label="编辑零|部件" off></sw-ribbon-button>
      <sw-ribbon-button width="44" icon="insertPart" label="插入零|部件" drop></sw-ribbon-button>
      <sw-ribbon-button width="34" icon="clip" label="配合"></sw-ribbon-button>
      <sw-ribbon-button width="48" icon="preview" label="零部件|预览窗|口" off></sw-ribbon-button>
      <sw-ribbon-button width="54" icon="pattern" label="线性零部|件阵列" drop></sw-ribbon-button>
      <sw-ribbon-button width="52" icon="smart" label="智能扣|件"></sw-ribbon-button>
      <sw-ribbon-button width="40" icon="move" label="移动零|部件" drop></sw-ribbon-button>
    </sw-ribbon-group>
    <sw-ribbon-group><sw-ribbon-button width="47" icon="showHide" label="显示隐|藏的零|部件"></sw-ribbon-button></sw-ribbon-group>
    <sw-ribbon-group>
      <sw-ribbon-button width="48" icon="asmFeature" label="装配体|特征" drop></sw-ribbon-button>
      <sw-ribbon-button width="46" icon="refGeom" label="参考几|何体" drop></sw-ribbon-button>
    </sw-ribbon-group>
    <sw-ribbon-group><sw-ribbon-button width="48" icon="motion" label="新建运|动算例"></sw-ribbon-button></sw-ribbon-group>
    <sw-ribbon-group><sw-ribbon-button width="48" icon="bom" label="材料明|细表"></sw-ribbon-button></sw-ribbon-group>
    <sw-ribbon-group>
      <sw-ribbon-button width="48" icon="explode" label="爆炸视|图"></sw-ribbon-button>
      <sw-ribbon-button width="46" icon="explodeLine" label="爆炸直|线草图" off></sw-ribbon-button>
    </sw-ribbon-group>
    <sw-ribbon-group><sw-ribbon-button width="62" icon="instant" label="Instant3D"></sw-ribbon-button></sw-ribbon-group>
    <sw-ribbon-group><sw-ribbon-button width="63" icon="speedpak" label="更新|Speedpak"></sw-ribbon-button></sw-ribbon-group>
    <sw-ribbon-group><sw-ribbon-button width="48" icon="camera" label="拍快照"></sw-ribbon-button></sw-ribbon-group>
  </sw-ribbon>
  <sw-tabs></sw-tabs>
  <main><sw-rail></sw-rail><sw-panel></sw-panel><sw-viewport></sw-viewport></main>`);
</script>
</body>
</html>
